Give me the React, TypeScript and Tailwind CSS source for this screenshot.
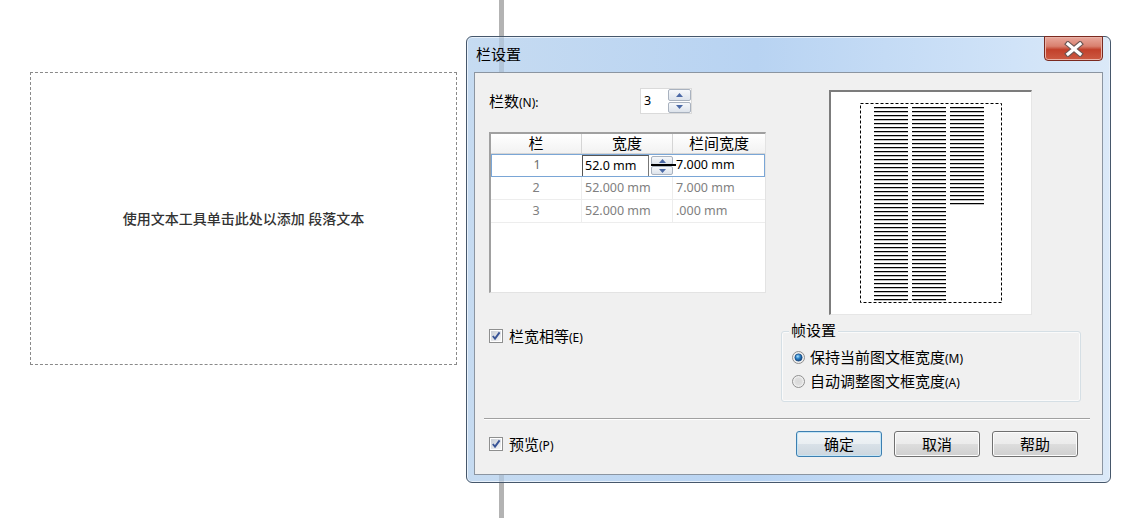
import React from 'react';

function Latin({ children }: { children: React.ReactNode }) {
  return <span className="text-[12px]">{children}</span>;
}

function CheckBox() {
  return (
    <span className="flex h-[14px] w-[14px] shrink-0 items-center justify-center border border-[#8e8f8f] bg-white">
      <span className="relative flex h-[10px] w-[10px] items-center justify-center bg-[linear-gradient(135deg,#c9ced6,#f7f7f7)]">
        <svg width="10" height="10" viewBox="0 0 10 10" className="absolute">
          <path d="M1.8 5 L4 7.6 L8.6 1.4" fill="none" stroke="#3a5597" strokeWidth="1.9" />
        </svg>
      </span>
    </span>
  );
}

function Radio({ on, id }: { on?: boolean; id: string }) {
  return (
    <svg width="13" height="13" viewBox="0 0 13 13" className="shrink-0">
      <defs>
        <radialGradient id={`${id}o`} cx="50%" cy="50%" r="60%">
          <stop offset="0" stopColor="#d8d8d8" />
          <stop offset="1" stopColor="#fafafa" />
        </radialGradient>
        <radialGradient id={`${id}i`} cx="40%" cy="35%" r="70%">
          <stop offset="0" stopColor="#a6e0ff" />
          <stop offset="0.45" stopColor="#2d82c6" />
          <stop offset="1" stopColor="#0d3b73" />
        </radialGradient>
      </defs>
      <circle cx="6.5" cy="6.5" r="6" fill={`url(#${id}o)`} stroke="#8f8f8f" />
      {on ? (
        <circle cx="6.5" cy="6.5" r="3.6" fill={`url(#${id}i)`} stroke="#1b4c86" strokeWidth="0.8" />
      ) : (
        <circle cx="6.5" cy="6.5" r="4" fill="#d9d9d9" opacity="0.6" />
      )}
    </svg>
  );
}

function Arrow({ up }: { up?: boolean }) {
  return (
    <svg width="7" height="4" viewBox="0 0 7 4">
      <path d={up ? 'M0 4 L3.5 0 L7 4 Z' : 'M0 0 L3.5 4 L7 0 Z'} fill="#4b69a6" />
    </svg>
  );
}

function SpinHalf({ up }: { up?: boolean }) {
  return (
    <div className="flex flex-1 items-center justify-center rounded-[2px] border border-[#a9b2bf] bg-[linear-gradient(#f6f8fb,#dde3eb)]">
      <Arrow up={up} />
    </div>
  );
}

function Btn({ children, focused }: { children: React.ReactNode; focused?: boolean }) {
  return (
    <div
      className={
        focused
          ? 'flex h-[26px] w-[86px] items-center justify-center rounded-[3px] border border-[#3c7fb1] bg-[linear-gradient(#f1f5f8_0%,#e9eef2_50%,#d9e1e8_50%,#ccd6de_100%)] text-[15px] text-black shadow-[inset_0_0_0_1px_#c4e5f6]'
          : 'flex h-[26px] w-[86px] items-center justify-center rounded-[3px] border border-[#707070] bg-[linear-gradient(#f2f2f2_0%,#ebebeb_50%,#dddddd_50%,#cfcfcf_100%)] text-[15px] text-black shadow-[inset_0_0_0_1px_#fcfcfc]'
      }
    >
      {children}
    </div>
  );
}

function Preview() {
  const ys = Array.from({ length: 49 }, (_, i) => 15 + i * 4);
  return (
    <div className="h-[225px] w-[203px] border-b border-l-2 border-r border-t-2 border-b-[#e6e6e6] border-l-[#7c7c7c] border-r-[#e6e6e6] border-t-[#7c7c7c] bg-white">
      <svg width="200" height="222" viewBox="0 0 200 222">
        <rect x="29.5" y="11.5" width="141" height="199" fill="none" stroke="#000" strokeDasharray="3 2" />
        {ys.map((y) => (
          <g key={y}>
            <rect x="43" y={y} width="34" height="1.25" fill="#000" />
            <rect x="81" y={y} width="34" height="1.25" fill="#000" />
            {y <= 111 && <rect x="119" y={y} width="34" height="1.25" fill="#000" />}
          </g>
        ))}
      </svg>
    </div>
  );
}

function ColumnsTable() {
  const rows = [
    { n: '2', w: '52.000 mm', g: '7.000 mm' },
    { n: '3', w: '52.000 mm', g: '.000 mm' },
  ];
  return (
    <div className="h-[161px] w-[277px] border-b border-l-2 border-r border-t-2 border-b-[#e3e3e3] border-l-[#a0a0a0] border-r-[#e3e3e3] border-t-[#a0a0a0] bg-white">
      {/* header */}
      <div className="flex h-[20px] border-b border-[#d5d5d5] bg-[linear-gradient(#ffffff,#f2f2f2)] text-[15px] leading-[19px] text-black">
        <div className="w-[91px] border-r border-[#d5d5d5] text-center">栏</div>
        <div className="w-[91px] border-r border-[#d5d5d5] text-center">宽度</div>
        <div className="flex-1 text-center">栏间宽度</div>
      </div>
      {/* editing row */}
      <div className="relative flex h-[23px] items-center border border-[#7aa6d6] text-[12.5px]">
        <div className="w-[90px] text-center text-[#6d6d6d]">1</div>
        <div className="flex h-full w-[91px] items-center">
          <div className="flex h-full w-[67px] items-center border-l border-r border-t border-l-[#555] border-r-[#777] border-t-[#555] pl-[2px] text-black">
            52.0 mm
          </div>
          <div className="relative ml-[2px] flex h-[19px] w-[22px] flex-col gap-[1px]">
            <SpinHalf up />
            <SpinHalf />
            <div className="absolute left-0 top-[8px] h-[2px] w-[25px] bg-black" />
          </div>
        </div>
        <div className="flex-1 pl-[3px] text-black">7.000 mm</div>
      </div>
      {rows.map((r) => (
        <div key={r.n} className="flex h-[23px] items-center border-b border-[#ededed] text-[12.5px] text-[#808080]">
          <div className="flex h-full w-[91px] items-center justify-center border-r border-[#ededed]">{r.n}</div>
          <div className="flex h-full w-[91px] items-center border-r border-[#ededed] pl-[3px]">{r.w}</div>
          <div className="flex-1 pl-[3px]">{r.g}</div>
        </div>
      ))}
    </div>
  );
}

function CloseButton() {
  return (
    <div className="absolute right-0 top-[-1px] flex h-[25px] w-[59px] items-center justify-center rounded-b-[4px] border border-[#7a2a20] bg-[linear-gradient(#e8a89c_0%,#d9806f_40%,#c2402b_55%,#cc5a43_100%)] shadow-[inset_0_0_0_1px_#eab3a8]">
      <svg width="20" height="16" viewBox="0 0 20 16">
        <path d="M4 3 L16 13 M16 3 L4 13" stroke="#6b5654" strokeWidth="5.5" strokeLinecap="square" />
        <path d="M4 3 L16 13 M16 3 L4 13" stroke="#ffffff" strokeWidth="3.2" strokeLinecap="square" />
      </svg>
    </div>
  );
}

function ColumnDialog() {
  return (
    <div className="absolute left-[466px] top-[36px] flex h-[447px] w-[645px] flex-col rounded-[6px] border border-[#46576b] bg-[linear-gradient(90deg,#c6dbf1_0%,#b8d3f2_45%,#d0e3f8_85%,#dbe9f8_100%)] px-[7px] pb-[7px] shadow-[inset_0_0_0_1px_#e8f1fb]">
      {/* guide line showing through the glass frame */}
      <div className="absolute bottom-0 left-[32px] top-0 w-[5px] bg-[#7d8894]/25" />
      <div className="relative flex h-[35px] items-center pl-[2px]">
        <span className="text-[15px] text-black">栏设置</span>
        <CloseButton />
      </div>

      <div className="relative flex flex-1 flex-col border border-[#8b95a1] bg-[#f0f0f0] text-[15px] text-black">
        {/* top: table + preview */}
        <div className="flex h-[245px]">
          <div className="w-[291px] pl-[14px] pt-[15px]">
            <div className="flex h-[26px] items-center">
              <div className="w-[151px]">
                栏数<Latin>(N):</Latin>
              </div>
              <div className="flex h-[26px] w-[52px] border border-[#dadada] bg-white">
                <div className="flex flex-1 items-center pl-[3px] text-[12.5px]">3</div>
                <div className="flex w-[23px] flex-col gap-[1px]">
                  <SpinHalf up />
                  <SpinHalf />
                </div>
              </div>
            </div>
            <div className="mt-[18px]">
              <ColumnsTable />
            </div>
          </div>
          <div className="ml-[63px] pt-[17px]">
            <Preview />
          </div>
        </div>

        {/* middle: equal width + frame settings */}
        <div className="flex h-[100px]">
          <div className="w-[306px] pl-[14px] pt-[7px]">
            <div className="flex items-center gap-[6px]">
              <CheckBox />
              <span>
                栏宽相等<Latin>(E)</Latin>
              </span>
            </div>
          </div>
          <div className="relative mt-[13px] h-[71px] w-[300px] rounded-[3px] border border-[#d5dfe5] pl-[10px] pt-[13px] shadow-[inset_0_0_0_1px_#fafafa]">
            <span className="absolute left-[7px] top-[-12px] bg-[#f0f0f0] px-[2px] leading-[20px]">帧设置</span>
            <div className="flex h-[24px] items-center gap-[5px]">
              <Radio on id="r1" />
              <span>
                保持当前图文框宽度<Latin>(M)</Latin>
              </span>
            </div>
            <div className="flex h-[24px] items-center gap-[5px]">
              <Radio id="r2" />
              <span>
                自动调整图文框宽度<Latin>(A)</Latin>
              </span>
            </div>
          </div>
        </div>

        <div className="ml-[9px] mr-[12px] border-b border-t border-b-white border-t-[#a0a0a0]" />

        {/* bottom: preview + buttons */}
        <div className="flex items-center pr-[24px] pt-[11px]">
          <div className="flex items-center gap-[6px] pl-[14px]">
            <CheckBox />
            <span>
              预览<Latin>(P)</Latin>
            </span>
          </div>
          <div className="ml-auto flex gap-[12px]">
            <Btn focused>确定</Btn>
            <Btn>取消</Btn>
            <Btn>帮助</Btn>
          </div>
        </div>
      </div>
    </div>
  );
}

export default function App() {
  return (
    <div className="relative h-[518px] w-[1128px] overflow-hidden bg-white font-['Noto_Sans','Noto_Sans_CJK_SC',sans-serif]">
      <div className="pl-[30px] pt-[72px]">
        <div className="flex h-[293px] w-[427px] items-center justify-center border border-dashed border-[#8a8a8a] text-[14px] font-medium text-[#333]">
          使用文本工具单击此处以添加 段落文本
        </div>
      </div>
      <div className="absolute left-[499px] top-0 h-full w-[5px] bg-[#b3b3b3]" />
      <ColumnDialog />
    </div>
  );
}
